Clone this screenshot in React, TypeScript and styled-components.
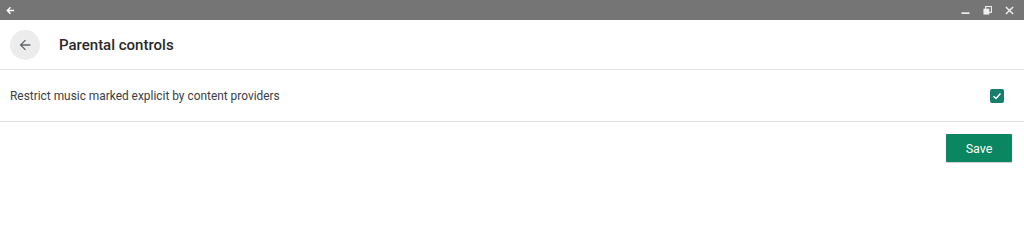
import React from "react";
import styled, { createGlobalStyle } from "styled-components";

const Global = createGlobalStyle`
  html, body { margin: 0; padding: 0; background: #fff; }
  body { font-family: Roboto, "Noto Sans", "Liberation Sans", sans-serif; }
`;

const Page = styled.div`
  width: 1024px;
  height: 233px;
  display: flex;
  flex-direction: column;
  background: #fff;
  overflow: hidden;
`;

const TitleBar = styled.div`
  height: 20px;
  background: #757575;
  display: flex;
  align-items: center;
  justify-content: space-between;
  padding: 0 6px 0 6px;
  box-sizing: border-box;
  flex-shrink: 0;
`;

const WinControls = styled.div`
  display: flex;
  align-items: center;
  gap: 13px;
  padding-right: 4px;
`;

const Header = styled.div`
  height: 50px;
  display: flex;
  align-items: center;
  padding-left: 10px;
  border-bottom: 1px solid #e3e3e3;
  box-sizing: border-box;
  flex-shrink: 0;
`;

const BackButton = styled.div`
  width: 30px;
  height: 30px;
  border-radius: 50%;
  background: #ececec;
  display: flex;
  align-items: center;
  justify-content: center;
  margin-right: 19px;
`;

const Title = styled.div`
  font-size: 15px;
  font-weight: 500;
  color: #2a2a2a;
  letter-spacing: 0;
`;

const Row = styled.div`
  height: 52px;
  display: flex;
  align-items: center;
  justify-content: space-between;
  padding: 0 20px 0 10px;
  border-bottom: 1px solid #e3e3e3;
  box-sizing: border-box;
  flex-shrink: 0;
`;

const Label = styled.div`
  font-size: 11.9px;
  color: #3c4043;
`;

const Check = styled.div`
  width: 14px;
  height: 14px;
  border-radius: 2px;
  background: #167e6b;
  display: flex;
  align-items: center;
  justify-content: center;
`;

const Footer = styled.div`
  display: flex;
  justify-content: flex-end;
  padding: 12px 12px 0 0;
`;

const SaveButton = styled.button`
  width: 66px;
  height: 28px;
  border: none;
  border-radius: 1px;
  background: #0a8660;
  color: #fff;
  font-family: Roboto, "Noto Sans", "Liberation Sans", sans-serif;
  font-size: 12.5px;
  font-weight: 400;
  padding: 0;
  box-shadow: 0 1px 1px rgba(0,0,0,0.2);
`;

export default function App() {
  return (
    <Page>
      <Global />
      <TitleBar>
        <svg width="9" height="9" viewBox="0 0 10 10">
          <path d="M9 5H2M5 1.5L1.5 5L5 8.5" stroke="#fff" strokeWidth="1.6" fill="none" />
        </svg>
        <WinControls>
          <svg width="9" height="9" viewBox="0 0 10 10">
            <rect x="0.5" y="7" width="9" height="1.8" fill="#f0f0f0" />
          </svg>
          <svg width="9" height="9" viewBox="0 0 10 10">
            <rect x="3" y="0.5" width="6.5" height="6.5" fill="none" stroke="#f0f0f0" strokeWidth="1.3" />
            <rect x="0.5" y="3" width="6.5" height="6.5" fill="#f0f0f0" />
          </svg>
          <svg width="9" height="9" viewBox="0 0 10 10">
            <path d="M1 1L9 9M9 1L1 9" stroke="#f0f0f0" strokeWidth="1.6" />
          </svg>
        </WinControls>
      </TitleBar>
      <Header>
        <BackButton>
          <svg width="16" height="16" viewBox="0 0 24 24">
            <path d="M20 11H7.83l5.59-5.59L12 4l-8 8 8 8 1.41-1.41L7.83 13H20v-2z" fill="#5f6368" />
          </svg>
        </BackButton>
        <Title>Parental controls</Title>
      </Header>
      <Row>
        <Label>Restrict music marked explicit by content providers</Label>
        <Check>
          <svg width="10" height="10" viewBox="0 0 10 10">
            <path d="M1.5 5.2L4 7.5L8.5 2.5" stroke="#fff" strokeWidth="1.5" fill="none" />
          </svg>
        </Check>
      </Row>
      <Footer>
        <SaveButton>Save</SaveButton>
      </Footer>
    </Page>
  );
}
